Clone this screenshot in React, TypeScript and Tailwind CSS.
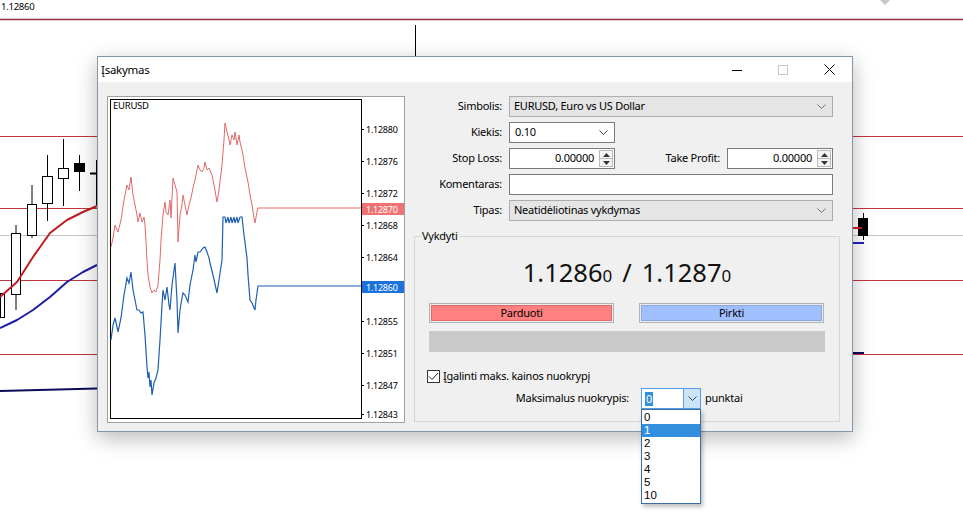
import React from 'react';

type Pt = [number, number];

const askLine: Pt[] = [
  [111, 247], [113, 238], [115, 225], [117, 230], [118, 232], [121, 220], [124, 200], [127, 185], [129, 190], [131, 177],
  [133, 195], [135, 205], [137, 215], [138, 222], [140, 213], [142, 222], [144, 217], [145, 225], [146, 242], [147, 260],
  [148, 275], [150, 287], [152, 293], [154, 290], [156, 292], [158, 285], [160, 260], [161, 240], [162, 228], [163, 215],
  [165, 202], [166, 212], [168, 215], [170, 200], [171, 218], [173, 178], [175, 185], [177, 192], [178, 242], [180, 215],
  [182, 205], [183, 195], [185, 205], [187, 215], [189, 205], [191, 198], [193, 188], [195, 180], [197, 170], [198, 165],
  [200, 170], [202, 172], [204, 168], [205, 162], [207, 170], [209, 168], [212, 175], [214, 185], [217, 202], [219, 190],
  [222, 165], [224, 140], [225, 123], [227, 132], [229, 140], [230, 145], [232, 135], [234, 140], [235, 132], [237, 145],
  [239, 135], [240, 142], [242, 150], [243, 155], [245, 168], [248, 182], [250, 195], [252, 205], [254, 218], [255, 223],
  [257, 212], [258, 208], [361, 208],
];

const bidLine: Pt[] = [
  [111, 340], [113, 325], [115, 318], [117, 327], [118, 332], [121, 318], [124, 295], [127, 278], [129, 283], [131, 272],
  [133, 290], [135, 300], [137, 310], [139, 310], [141, 313], [143, 312], [145, 335], [147, 367], [148, 378], [149, 372],
  [150, 387], [151, 380], [152, 395], [154, 383], [156, 378], [158, 370], [160, 340], [162, 305], [163, 290], [165, 300],
  [167, 287], [169, 305], [170, 310], [172, 285], [175, 263], [177, 300], [178, 333], [180, 310], [182, 298], [183, 293],
  [185, 295], [188, 302], [190, 285], [193, 270], [195, 255], [196, 262], [198, 252], [200, 252], [203, 248], [205, 247],
  [207, 252], [209, 258], [210, 263], [213, 275], [217, 293], [219, 280], [222, 260], [223, 217], [225, 217], [226, 223],
  [228, 217], [229, 223], [231, 217], [232, 223], [234, 217], [235, 223], [237, 217], [238, 223], [240, 217], [242, 217],
  [244, 235], [247, 258], [248, 275], [250, 300], [252, 303], [255, 310], [256, 300], [258, 286], [361, 286],
];

const axis = [
  { y: 129, t: '1.12880' },
  { y: 161, t: '1.12876' },
  { y: 193, t: '1.12872' },
  { y: 225, t: '1.12868' },
  { y: 257, t: '1.12864' },
  { y: 321, t: '1.12855' },
  { y: 353, t: '1.12851' },
  { y: 385, t: '1.12847' },
  { y: 414, t: '1.12843' },
];

const candles = [
  { x: 0, w: 4, top: 293, bot: 317, hi: 293, lo: 317, fill: '#fff' },
  { x: 11, w: 9, top: 233, bot: 294, hi: 225, lo: 310, fill: '#fff' },
  { x: 27, w: 9, top: 204, bot: 235, hi: 185, lo: 238, fill: '#fff' },
  { x: 42, w: 10, top: 176, bot: 203, hi: 155, lo: 221, fill: '#fff' },
  { x: 58, w: 10, top: 168, bot: 178, hi: 139, lo: 206, fill: '#fff' },
  { x: 74, w: 10, top: 163, bot: 171, hi: 155, lo: 191, fill: '#000' },
];

const slippage = ['0', '1', '2', '3', '4', '5', '10'];

const pts = (a: Pt[]) => a.map((p) => p.join(',')).join(' ');

function BackgroundChart() {
  return (
    <svg className="absolute inset-0" width={963} height={526} viewBox="0 0 963 526">
      <line x1={0} x2={963} y1={19.5} y2={19.5} stroke="#8e2f3b" strokeWidth={1.5} />
      {[136, 208, 280, 354].map((y) => (
        <line key={y} x1={0} x2={963} y1={y + 0.5} y2={y + 0.5} stroke="#c2353c" />
      ))}
      <line x1={0} x2={963} y1={235.5} y2={235.5} stroke="#c4c4c4" />
      <text x={1} y={10} fontSize={9.5} fontFamily="Noto Sans, sans-serif" fill="#000">1.12860</text>
      <line x1={415.5} x2={415.5} y1={25} y2={56} stroke="#000" />
      <polygon points="880,0 890,0 885,5" fill="#c8c8c8" />

      {candles.map((c) => (
        <g key={c.x}>
          <line x1={c.x + c.w / 2 + 0.5} x2={c.x + c.w / 2 + 0.5} y1={c.hi} y2={c.lo} stroke="#000" />
          <rect x={c.x + 0.5} y={c.top + 0.5} width={c.w} height={c.bot - c.top} fill={c.fill} stroke="#000" />
        </g>
      ))}
      <line x1={96.5} x2={96.5} y1={160} y2={205} stroke="#000" />
      <line x1={90} x2={97} y1={173.5} y2={173.5} stroke="#000" strokeWidth={2} />

      <polyline
        points="0,297 17,282 33,257 50,233 67,220 83,212 97,206"
        fill="none"
        stroke="#c01b22"
        strokeWidth={2}
        strokeLinejoin="round"
      />
      <polyline
        points="0,328 17,320 33,310 50,297 67,282 83,272 97,265"
        fill="none"
        stroke="#1d1da6"
        strokeWidth={2}
        strokeLinejoin="round"
      />
      <line x1={0} x2={97} y1={391} y2={388.5} stroke="#0c0c5c" strokeWidth={2} />

      <line x1={852.5} x2={852.5} y1={168} y2={218} stroke="#000" />
      <line x1={863.5} x2={863.5} y1={213} y2={240} stroke="#000" />
      <rect x={858} y={218} width={10} height={18} fill="#000" />
      <line x1={852} x2={862} y1={228} y2={228} stroke="#d0202a" strokeWidth={2} />
      <line x1={852} x2={864} y1={243} y2={243} stroke="#2020c0" strokeWidth={2} />
      <line x1={852} x2={864} y1={353} y2={353} stroke="#0c0c5c" strokeWidth={2} />
    </svg>
  );
}

function TitleBar() {
  return (
    <div className="flex h-[25px] shrink-0 items-center bg-white">
      <span className="pl-[3px] text-[11.5px]">
        <span className="underline">Į</span>sakymas
      </span>
      <div className="ml-auto flex h-full">
        <div className="flex h-full w-[46px] items-center justify-center">
          <svg width={10} height={10} viewBox="0 0 10 10">
            <line x1={0} x2={10} y1={5.5} y2={5.5} stroke="#000" />
          </svg>
        </div>
        <div className="flex h-full w-[46px] items-center justify-center">
          <svg width={10} height={10} viewBox="0 0 10 10">
            <rect x={0.5} y={0.5} width={9} height={9} fill="none" stroke="#c6c6c6" />
          </svg>
        </div>
        <div className="flex h-full w-[46px] items-center justify-center">
          <svg width={11} height={11} viewBox="0 0 11 11">
            <path d="M0.5 0.5 L10.5 10.5 M10.5 0.5 L0.5 10.5" stroke="#000" strokeWidth={1} />
          </svg>
        </div>
      </div>
    </div>
  );
}

function MiniChart() {
  return (
    <div className="ml-[9px] mt-[14px] h-[327px] w-[298px] shrink-0 border border-[#a0a0a0] bg-white">
      <svg width={296} height={325} viewBox="108 97 296 325" className="block" fontFamily="Noto Sans, sans-serif">
        <rect x={110.5} y={99.5} width={251} height={319} fill="#fff" stroke="#000" />
        <text x={113} y={109} fontSize={9.5} fill="#000">EURUSD</text>
        <polyline points={pts(askLine)} fill="none" stroke="#e06a6a" strokeWidth={1} />
        <polyline points={pts(bidLine)} fill="none" stroke="#1f5fb0" strokeWidth={1.2} />
        {axis.map((a) => (
          <g key={a.t}>
            <line x1={361} x2={364} y1={a.y + 0.5} y2={a.y + 0.5} stroke="#000" />
            <text x={366} y={a.y + 3.5} fontSize={9} fill="#000">{a.t}</text>
          </g>
        ))}
        <line x1={361} x2={364} y1={289.5} y2={289.5} stroke="#000" />
        <rect x={362} y={203} width={42} height={12} fill="#ef7272" />
        <text x={366} y={212.5} fontSize={9} fill="#fff">1.12870</text>
        <rect x={362} y={281} width={42} height={12} fill="#1b72dc" />
        <text x={366} y={290.5} fontSize={9} fill="#fff">1.12860</text>
      </svg>
    </div>
  );
}

function Chevron({ color = '#707070' }: { color?: string }) {
  return (
    <svg width={9} height={5} viewBox="0 0 9 5" className="shrink-0">
      <polyline points="0.5,0.5 4.5,4.5 8.5,0.5" fill="none" stroke={color} strokeWidth={1} />
    </svg>
  );
}

function Spinner() {
  return (
    <div className="my-[1px] mr-[1px] flex w-[14px] flex-col border border-[#b9b9b9] bg-[#f4f4f4]">
      <div className="flex flex-1 items-center justify-center border-b border-[#b9b9b9]">
        <svg width={7} height={4} viewBox="0 0 7 4">
          <polygon points="0,4 7,4 3.5,0" fill="#333" />
        </svg>
      </div>
      <div className="flex flex-1 items-center justify-center">
        <svg width={7} height={4} viewBox="0 0 7 4">
          <polygon points="0,0 7,0 3.5,4" fill="#333" />
        </svg>
      </div>
    </div>
  );
}

function SpinInput({ value, width }: { value: string; width: string }) {
  return (
    <div className={`flex h-[21px] items-stretch border border-[#7a7a7a] bg-white ${width}`}>
      <span className="flex flex-1 items-center justify-end pr-[5px]">{value}</span>
      <Spinner />
    </div>
  );
}

function OrderForm() {
  return (
    <div className="ml-[9px] mt-[14px] flex w-[426px] flex-col">
      <div className="grid grid-cols-[88px_1fr] items-center gap-x-[7px] gap-y-[5px] pr-[7px]">
        <span className="text-right">Simbolis:</span>
        <div className="flex h-[21px] items-center border border-[#adadad] bg-[#e5e5e5] pl-[4px] pr-[6px]">
          <span className="flex-1">EURUSD, Euro vs US Dollar</span>
          <Chevron />
        </div>

        <span className="text-right">Kiekis:</span>
        <div className="flex h-[21px] w-[106px] items-center border border-[#7a7a7a] bg-white pl-[5px] pr-[6px]">
          <span className="flex-1">0.10</span>
          <Chevron color="#404040" />
        </div>

        <span className="text-right">Stop Loss:</span>
        <div className="flex items-center">
          <SpinInput value="0.00000" width="w-[106px]" />
          <span className="flex-1 pr-[7px] text-right">Take Profit:</span>
          <SpinInput value="0.00000" width="w-[106px]" />
        </div>

        <span className="text-right">Komentaras:</span>
        <div className="h-[21px] border border-[#7a7a7a] bg-white" />

        <span className="text-right">Tipas:</span>
        <div className="flex h-[21px] items-center border border-[#adadad] bg-[#e5e5e5] pl-[4px] pr-[6px]">
          <span className="flex-1">Neatidėliotinas vykdymas</span>
          <Chevron />
        </div>
      </div>

      <div className="relative mt-[15px] border border-[#d6d6d6] pb-[12px] pt-[21px]">
        <span className="absolute left-[6px] top-[-8px] bg-[#f0f0f0] pl-[1px] pr-[2px] leading-[14px]">Vykdyti</span>

        <div className="flex h-[28px] items-baseline justify-center leading-[28px] tracking-normal text-[#111]">
          <span className="text-[25.5px]">1.1286</span>
          <span className="text-[17px]">0</span>
          <span className="px-[10px] text-[25.5px]">/</span>
          <span className="text-[25.5px]">1.1287</span>
          <span className="text-[17px]">0</span>
        </div>

        <div className="mt-[17px] flex justify-between pl-[14px] pr-[15px]">
          <div className="h-[20px] w-[185px] border border-[#b4b4b4] bg-[#ececec] p-[1px]">
            <div className="flex h-full items-center justify-center border border-[#e06b6b] bg-[#ff8080]">Parduoti</div>
          </div>
          <div className="h-[20px] w-[185px] border border-[#b4b4b4] bg-[#ececec] p-[1px]">
            <div className="flex h-full items-center justify-center border border-[#8aa8e0] bg-[#a0bfff]">Pirkti</div>
          </div>
        </div>

        <div className="ml-[14px] mr-[14px] mt-[8px] h-[21px] bg-[#c9c9c9]" />

        <div className="mt-[17px] flex h-[14px] items-center pl-[12px]">
          <div className="flex h-[13px] w-[13px] items-center justify-center border border-[#333] bg-white">
            <svg width={11} height={9} viewBox="0 0 11 9">
              <polyline points="1,4.5 4,7.5 10,1" fill="none" stroke="#222" strokeWidth={1} />
            </svg>
          </div>
          <span className="ml-[3px]">
            <span className="underline">Į</span>galinti maks. kainos nuokrypį
          </span>
        </div>

        <div className="mt-[5px] flex h-[21px] items-center">
          <span className="w-[214px] text-right">Maksimalus nuokrypis:</span>
          <div className="relative ml-[12px] flex h-[21px] w-[60px] border border-[#569de5] bg-white">
            <div className="flex flex-1 items-center pl-[3px]">
              <span className="bg-[#3390df] px-[1px] leading-[14px] text-white">0</span>
            </div>
            <div className="flex w-[17px] items-center justify-center border-l border-[#569de5] bg-[#cce4f7]">
              <Chevron color="#404040" />
            </div>
            <div className="absolute left-[-1px] top-[20px] z-10 w-[60px] border border-[#3a6ea5] bg-white py-[1px] font-['Liberation_Sans',sans-serif] text-[11.5px] tracking-normal shadow-[2px_3px_4px_rgba(0,0,0,0.25)]">
              {slippage.map((v) => (
                <div
                  key={v}
                  className={`h-[13px] pl-[2px] leading-[13px] ${v === '1' ? 'bg-[#3390df] text-white' : ''}`}
                >
                  {v}
                </div>
              ))}
            </div>
          </div>
          <span className="ml-[4px]">punktai</span>
        </div>
      </div>
    </div>
  );
}

export default function App() {
  return (
    <div className="relative h-[526px] w-[963px] overflow-hidden bg-white font-['Noto_Sans',sans-serif] text-[11px] tracking-[-0.25px] text-black">
      <BackgroundChart />
      <div className="absolute left-[97px] top-[56px] flex h-[376px] w-[756px] flex-col border border-[#8496a8] bg-[#f0f0f0] shadow-[0_6px_20px_rgba(0,0,0,0.28)]">
        <TitleBar />
        <div className="flex flex-1 items-start">
          <MiniChart />
          <OrderForm />
        </div>
      </div>
    </div>
  );
}
